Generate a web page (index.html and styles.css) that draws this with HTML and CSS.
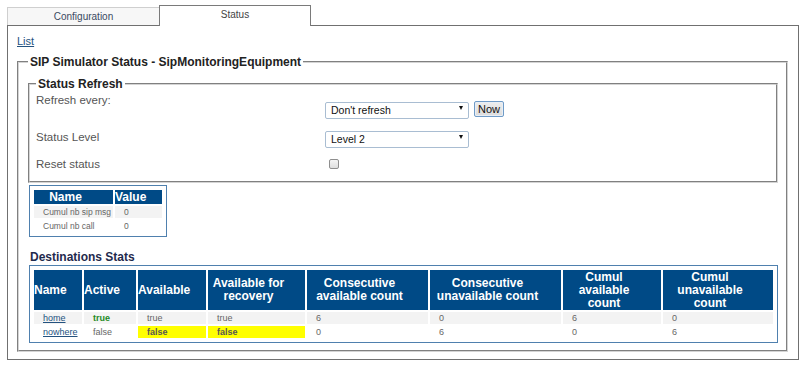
FILE: index.html
```html
<!DOCTYPE html>
<html>
<head>
<meta charset="utf-8">
<title>SIP Simulator Status</title>
<link rel="stylesheet" href="styles.css">
</head>
<body>
<div class="page">
  <div class="tabs">
    <div class="tab">Configuration</div>
    <div class="tab active">Status</div>
  </div>
  <div class="panel">
    <div class="list-row"><a href="#" class="link">List</a></div>
    <fieldset class="fs-outer">
      <legend>SIP Simulator Status - SipMonitoringEquipment</legend>
      <fieldset class="fs-inner">
        <legend>Status Refresh</legend>
        <div class="row row-refresh">
          <div class="label">Refresh every:</div>
          <div class="controls">
            <span class="select-wrap"><select class="select"><option>Don't refresh</option></select></span>
            <button class="btn">Now</button>
          </div>
        </div>
        <div class="row row-level">
          <div class="label">Status Level</div>
          <div class="controls">
            <span class="select-wrap"><select class="select"><option>Level 2</option></select></span>
          </div>
        </div>
        <div class="row row-reset">
          <div class="label">Reset status</div>
          <div class="controls">
            <input type="checkbox" class="check">
          </div>
        </div>
      </fieldset>

      <table class="grid kv">
        <colgroup><col class="kv-c1"><col class="kv-c2"></colgroup>
        <thead>
          <tr><th>Name</th><th>Value</th></tr>
        </thead>
        <tbody>
          <tr class="alt"><td>Cumul nb sip msg</td><td>0</td></tr>
          <tr><td>Cumul nb call</td><td>0</td></tr>
        </tbody>
      </table>

      <h3 class="section-title">Destinations Stats</h3>
      <table class="grid dest">
        <colgroup>
          <col class="c-name"><col class="c-active"><col class="c-avail"><col class="c-recov">
          <col class="c-cav"><col class="c-cun"><col class="c-uav"><col class="c-uun">
        </colgroup>
        <thead>
          <tr>
            <th>Name</th>
            <th>Active</th>
            <th>Available</th>
            <th>Available for recovery</th>
            <th>Consecutive available count</th>
            <th>Consecutive unavailable count</th>
            <th>Cumul available count</th>
            <th>Cumul unavailable count</th>
          </tr>
        </thead>
        <tbody>
          <tr class="alt">
            <td><a href="#" class="link">home</a></td>
            <td class="ok">true</td>
            <td>true</td>
            <td>true</td>
            <td>6</td>
            <td>0</td>
            <td>6</td>
            <td>0</td>
          </tr>
          <tr>
            <td><a href="#" class="link">nowhere</a></td>
            <td>false</td>
            <td class="warn">false</td>
            <td class="warn">false</td>
            <td>0</td>
            <td>6</td>
            <td>0</td>
            <td>6</td>
          </tr>
        </tbody>
      </table>
    </fieldset>
  </div>
</div>
</body>
</html>
```

FILE: styles.css
```css
html, body {
  margin: 0;
  padding: 0;
  background: #ffffff;
  font-family: "Liberation Sans", Arial, sans-serif;
}

.page {
  padding: 5px 1px 0 7px;
}

/* Tabs */
.tabs {
  display: flex;
  align-items: flex-end;
  height: 21px;
  margin-bottom: -1px;
  position: relative;
  z-index: 1;
}

.tab {
  box-sizing: border-box;
  width: 152px;
  height: 18px;
  margin-bottom: 1px;
  border-top: 1px solid #cfcfcf;
  border-left: 1px solid #cfcfcf;
  background: #f7f7f7;
  color: #3a4a62;
  font-size: 10px;
  line-height: 17px;
  text-align: center;
}

.tab.active {
  width: 152px;
  height: 21px;
  margin-bottom: 0;
  border: 1px solid #7a7a7a;
  border-bottom: none;
  background: #ffffff;
  color: #444444;
  line-height: 18px;
}

/* Panel */
.panel {
  border: 1px solid #707070;
  padding: 9px 10px 7px 9px;
  background: #ffffff;
}

.list-row {
  font-size: 11px;
  line-height: 13px;
  height: 13px;
}

.link {
  color: #24527f;
  text-decoration: underline;
}

/* Fieldsets */
fieldset {
  margin: 0;
  min-width: 0;
  border: 2px groove #d4d4d4;
}

legend {
  padding: 0 2px;
  font-size: 12px;
  font-weight: bold;
  line-height: 14px;
  color: #222222;
}

.fs-outer {
  margin-top: 7px;
  padding: 8px 8px 7px 9px;
}

.fs-inner {
  padding: 1px 6px 8px 6px;
}

/* Form rows */
.row {
  display: flex;
  align-items: center;
}

.label {
  width: 289px;
  flex: none;
  font-size: 11.5px;
  line-height: 16px;
  color: #555555;
}

.controls {
  display: flex;
  align-items: center;
  gap: 5px;
}

.row-refresh {
  height: 27px;
  align-items: flex-start;
}

.row-refresh .controls {
  margin-top: 8px;
}

.row-level {
  height: 36px;
}

.row-reset {
  height: 18px;
}

.select-wrap {
  position: relative;
  display: inline-block;
  width: 144px;
  height: 17px;
}

.select-wrap::after {
  content: "";
  position: absolute;
  right: 6px;
  top: 6px;
  border-left: 2.5px solid transparent;
  border-right: 2.5px solid transparent;
  border-top: 4px solid #111111;
  pointer-events: none;
}

.select {
  -webkit-appearance: none;
  appearance: none;
  box-sizing: border-box;
  width: 144px;
  height: 17px;
  margin: 0;
  padding: 0 14px 0 5px;
  border: 1px solid #a9bdd2;
  border-radius: 2px;
  background: #ffffff;
  color: #111111;
  font-family: "Liberation Sans", Arial, sans-serif;
  font-size: 10.5px;
  line-height: 15px;
}

.btn {
  box-sizing: border-box;
  width: 30px;
  height: 16px;
  margin: 0;
  padding: 0;
  border: 1px solid #6f9bc7;
  border-radius: 2px;
  background: linear-gradient(#ededed, #dcdcdc);
  box-shadow: inset 0 0 0 1px #e8eef5;
  color: #111111;
  font-family: "Liberation Sans", Arial, sans-serif;
  font-size: 11px;
  line-height: 14px;
}

.check {
  -webkit-appearance: none;
  appearance: none;
  box-sizing: border-box;
  width: 10px;
  height: 10px;
  margin: 0 0 0 4px;
  border: 1px solid #8e8e8e;
  border-radius: 2px;
  background: linear-gradient(#f4f4f4, #dedede);
}

/* Tables */
.grid {
  border: 1px solid #4f80ae;
  border-spacing: 2px;
  padding: 2px;
  margin-left: 1px;
  table-layout: fixed;
}

.grid th {
  padding: 0 16px 0 0;
  background: #004a86;
  color: #ffffff;
  font-size: 12px;
  font-weight: bold;
  line-height: 13px;
  text-align: center;
  vertical-align: middle;
}

.grid td {
  padding: 0 0 0 9px;
  font-size: 9px;
  line-height: 12px;
  height: 12px;
  color: #666666;
  text-align: left;
  white-space: nowrap;
}

.grid tr.alt td {
  background: #f3f3f3;
}

/* Key/value table */
.kv {
  width: 138px;
  margin-top: 2px;
}

.kv th {
  height: 14px;
  line-height: 14px;
}

.kv td {
  font-size: 8.5px;
}

.kv-c1 { width: 79px; }
.kv-c2 { width: 47px; }

/* Destinations */
.section-title {
  margin: 13px 0 0 2px;
  font-size: 12px;
  font-weight: bold;
  line-height: 14px;
  color: #1f2a4d;
}

.dest {
  width: 749px;
  margin-top: 1px;
}

.dest th {
  height: 40px;
}

.c-name { width: 48px; }
.c-active { width: 52px; }
.c-avail { width: 68px; }
.c-recov { width: 97px; }
.c-cav { width: 121px; }
.c-cun { width: 131px; }
.c-uav { width: 98px; }
.c-uun { width: 110px; }

.grid td.ok {
  color: #1f8a1f;
  font-weight: bold;
}

.grid td.warn,
.grid tr.alt td.warn {
  background: #ffff00;
  color: #555555;
  font-weight: bold;
}
```
